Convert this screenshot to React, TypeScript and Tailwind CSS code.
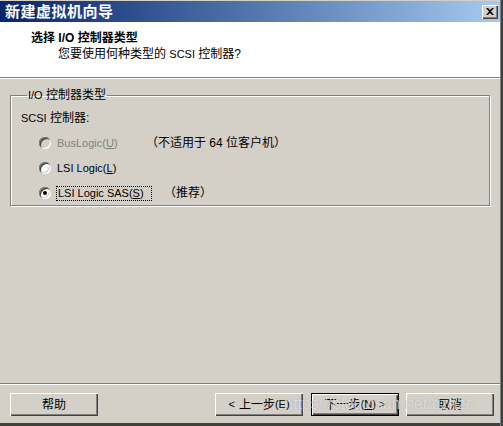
import React from 'react';

const cjk = { fontFamily: '"Liberation Sans", "Noto Sans CJK SC", sans-serif' };

const Radio: React.FC<{ checked?: boolean; disabled?: boolean }> = ({ checked, disabled }) => (
  <span
    className={`relative inline-block w-[12px] h-[12px] rounded-full shrink-0 ${
      disabled ? 'bg-[#d4d0c8]' : 'bg-white'
    } shadow-[inset_1px_1px_0_#808080,inset_-1px_-1px_0_#ffffff,inset_2px_2px_0_#404040,inset_-2px_-2px_0_#d4d0c8]`}
  >
    {checked && <span className="absolute left-[4px] top-[4px] w-[4px] h-[4px] rounded-full bg-black" />}
  </span>
);

const Button: React.FC<{ children: React.ReactNode; primary?: boolean; className?: string }> = ({
  children,
  primary,
  className = '',
}) => (
  <div
    className={`h-[23px] w-[88px] flex items-center justify-center bg-[#d4d0c8] text-[12px] text-black ${
      primary
        ? 'border border-black shadow-[inset_1px_1px_0_#ffffff,inset_-1px_-1px_0_#404040,inset_-2px_-2px_0_#808080]'
        : 'shadow-[inset_1px_1px_0_#ffffff,inset_-1px_-1px_0_#404040,inset_-2px_-2px_0_#808080]'
    } ${className}`}
  >
    {children}
  </div>
);

export default function App() {
  return (
    <div className="relative w-[503px] h-[426px] flex bg-[#d4d0c8] overflow-hidden" style={cjk}>
      <div className="flex-1 flex flex-col">
        {/* title bar */}
        <div className="h-[21px] mt-[1px] flex items-center justify-between bg-gradient-to-r from-[#0a246a] to-[#a6caf0] pl-[5px] pr-[2px]">
          <span className="text-white font-bold text-[15px] leading-none tracking-[0.5px]">新建虚拟机向导</span>
          <div className="w-[16px] h-[14px] bg-[#d4d0c8] flex items-center justify-center shadow-[inset_1px_1px_0_#ffffff,inset_-1px_-1px_0_#404040,inset_-2px_-2px_0_#808080]">
            <svg width="8" height="7" viewBox="0 0 8 7">
              <path d="M0 0h2l2 2 2-2h2L5 3.5 8 7H6L4 5 2 7H0l3-3.5z" fill="black" />
            </svg>
          </div>
        </div>

        {/* header */}
        <div className="h-[55px] bg-white pl-[31px] pt-[9px]">
          <div className="text-[12px] font-bold leading-[15px] text-black">
            选择 <span className="text-[12px]">I/O</span> 控制器类型
          </div>
          <div className="pl-[27px] mt-[1px] text-[12px] leading-[15px] text-black">
            您要使用何种类型的 <span className="text-[11px]">SCSI</span> 控制器?
          </div>
        </div>
        <div className="h-[1px] bg-[#808080]" />
        <div className="h-[1px] bg-white" />

        {/* body */}
        <div className="flex-1 px-[10px] pt-[9px]">
          <fieldset className="border border-[#808080] shadow-[inset_1px_1px_0_#ffffff,1px_1px_0_#ffffff] h-[118px] pl-[10px] pr-[10px]">
            <legend className="ml-[6px] px-[1px] text-[12px] leading-[14px] text-black">
              <span className="text-[11px]">I/O</span> 控制器类型
            </legend>
            <div className="mt-[9px] text-[12px] leading-[14px] text-black">
              <span className="text-[11px]">SCSI</span> 控制器:
            </div>
            <div className="flex flex-col gap-[11px] mt-[11px] pl-[18px] text-[11px] leading-[14px]">
              <div className="flex items-center h-[14px]">
                <Radio disabled />
                <span className="ml-[6px] w-[89px] text-[#808080]">
                  BusLogic(<span className="underline">U</span>)
                </span>
                <span className="text-[12px] text-black">（不适用于 64 位客户机）</span>
              </div>
              <div className="flex items-center h-[14px]">
                <Radio />
                <span className="ml-[6px] text-black">
                  LSI Logic(<span className="underline">L</span>)
                </span>
              </div>
              <div className="flex items-center h-[14px]">
                <Radio checked />
                <span className="ml-[5px] px-[1px] border border-dotted border-black text-black leading-[13px] w-[96px]">
                  LSI Logic SAS(<span className="underline">S</span>)
                </span>
                <span className="ml-[12px] text-[12px] text-black">（推荐）</span>
              </div>
            </div>
          </fieldset>
        </div>

        <div className="h-[1px] bg-[#808080]" />
        <div className="h-[1px] bg-white" />

        {/* buttons */}
        <div className="h-[38px] flex items-start pt-[8px] pl-[10px]">
          <Button>帮助</Button>
          <Button className="ml-[117px]">
            <span className="text-[11px] mr-[4px]">&lt;</span>上一步<span className="text-[11px]">(E)</span>
          </Button>
          <Button primary className="ml-[8px]">
            下一步<span className="text-[11px]">(<span className="underline">N</span>) &gt;</span>
          </Button>
          <Button className="ml-[7px]">取消</Button>
        </div>
        <div className="h-[3px] bg-[#404040]" />
      </div>
      <div className="w-[3px] flex">
        <div className="w-[1px] bg-[#808080]" />
        <div className="w-[2px] bg-[#404040]" />
      </div>

      <div
        className="absolute left-[284px] top-[395px] text-[16px] leading-[18px] text-white/70 [text-shadow:0_0_1px_rgba(0,0,0,0.35)] pointer-events-none"
        style={{ fontFamily: '"Liberation Sans", sans-serif' }}
      >
        https://blog.csdn.net/dzhzc
      </div>
    </div>
  );
}
